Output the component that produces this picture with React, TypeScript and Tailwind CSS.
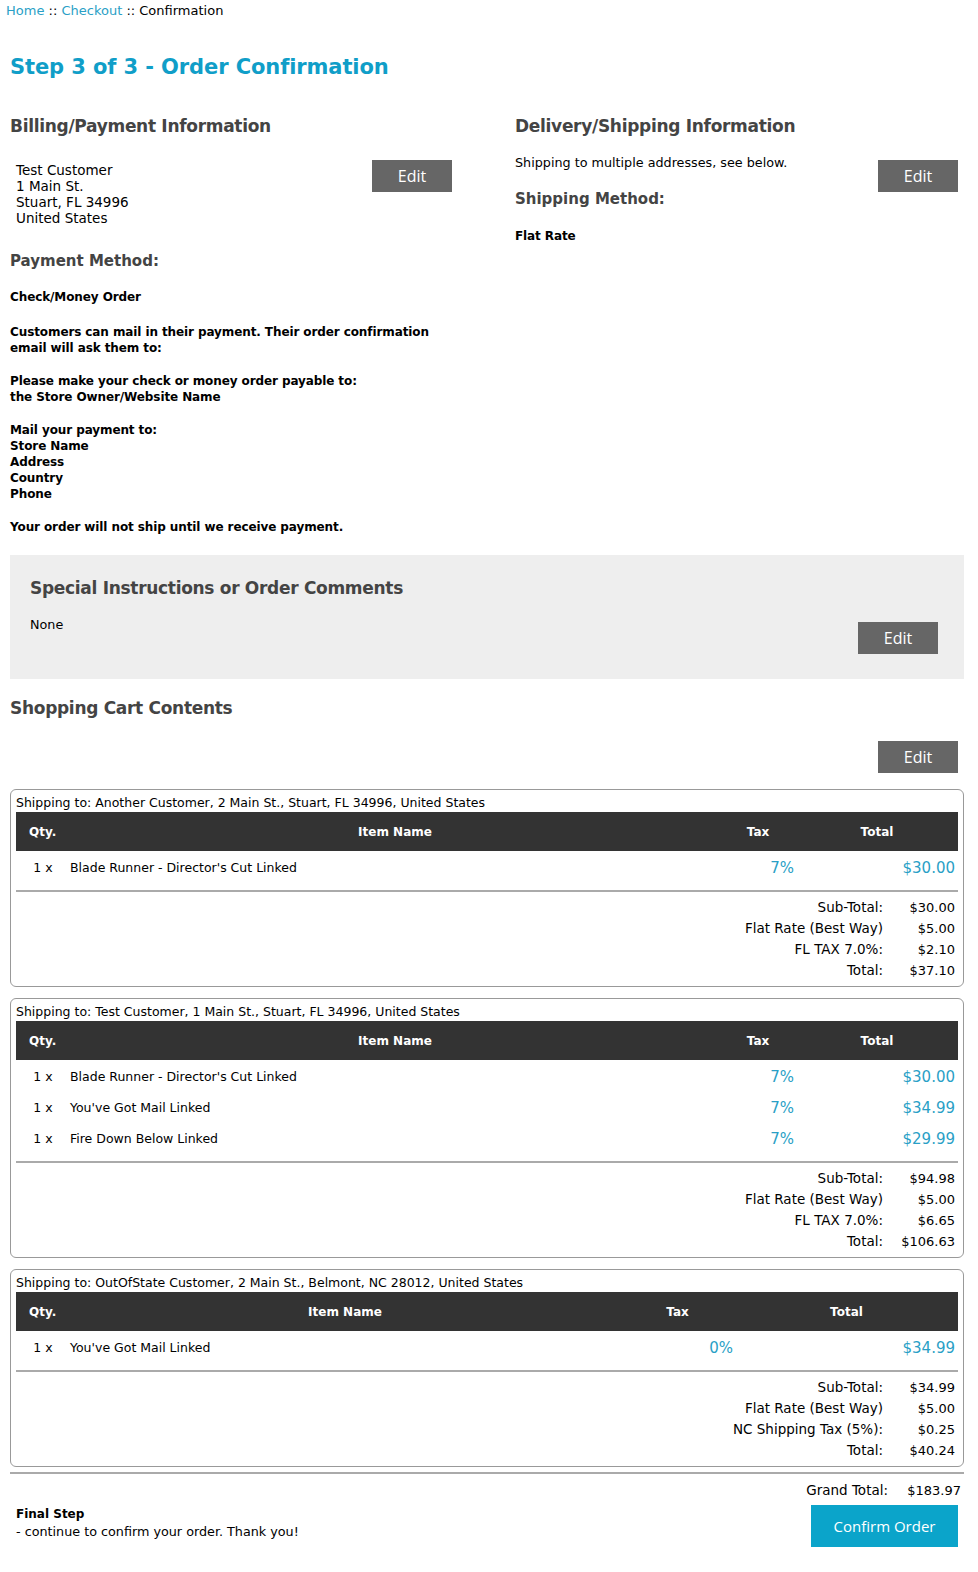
const font = "font-['Verdana','DejaVu_Sans',sans-serif]";

type Item = { qty: number; name: string; tax: string; total: string };
type Shipment = {
  address: string;
  items: Item[];
  totals: [string, string][];
  cols: [number, number, number, number];
};

const shipments: Shipment[] = [
  {
    address: "Another Customer, 2 Main St., Stuart, FL 34996, United States",
    items: [{ qty: 1, name: "Blade Runner - Director's Cut Linked", tax: "7%", total: "$30.00" }],
    totals: [
      ["Sub-Total:", "$30.00"],
      ["Flat Rate (Best Way)", "$5.00"],
      ["FL TAX 7.0%:", "$2.10"],
      ["Total:", "$37.10"],
    ],
    cols: [54, 650, 76, 162],
  },
  {
    address: "Test Customer, 1 Main St., Stuart, FL 34996, United States",
    items: [
      { qty: 1, name: "Blade Runner - Director's Cut Linked", tax: "7%", total: "$30.00" },
      { qty: 1, name: "You've Got Mail Linked", tax: "7%", total: "$34.99" },
      { qty: 1, name: "Fire Down Below Linked", tax: "7%", total: "$29.99" },
    ],
    totals: [
      ["Sub-Total:", "$94.98"],
      ["Flat Rate (Best Way)", "$5.00"],
      ["FL TAX 7.0%:", "$6.65"],
      ["Total:", "$106.63"],
    ],
    cols: [54, 650, 76, 162],
  },
  {
    address: "OutOfState Customer, 2 Main St., Belmont, NC 28012, United States",
    items: [{ qty: 1, name: "You've Got Mail Linked", tax: "0%", total: "$34.99" }],
    totals: [
      ["Sub-Total:", "$34.99"],
      ["Flat Rate (Best Way)", "$5.00"],
      ["NC Shipping Tax (5%):", "$0.25"],
      ["Total:", "$40.24"],
    ],
    cols: [54, 550, 115, 223],
  },
];

const heading = "text-[17px] leading-[22px] tracking-[-0.3px] font-bold text-[#444444]";
const boldText = "text-[12px] leading-[16px] tracking-[-0.1px] font-bold whitespace-nowrap";

function EditButton({ className = "" }: { className?: string }) {
  return (
    <button
      className={`w-[80px] h-[32px] bg-[#666666] text-white text-[16px] font-['Open_Sans','DejaVu_Sans',sans-serif] shrink-0 ${className}`}
    >
      Edit
    </button>
  );
}

function ShipmentBox({ s }: { s: Shipment }) {
  return (
    <div className="border border-[#999999] rounded-[6px] px-[5px] pt-[5px] pb-[5px]">
      <div className="text-[12.5px] leading-[16px] mb-[1px]">Shipping to: {s.address}</div>
      <table className="w-full border-collapse table-fixed">
        <colgroup>
          {s.cols.map((w, i) => (
            <col key={i} style={{ width: w }} />
          ))}
        </colgroup>
        <thead>
          <tr className="bg-[#333333] text-white text-[12px] font-bold h-[39px]">
            <th className="text-left pl-[13px]">Qty.</th>
            <th className="text-center">Item Name</th>
            <th className="text-center">Tax</th>
            <th className="text-center">Total</th>
          </tr>
        </thead>
        <tbody>
          <tr className="h-[2px]" />
          {s.items.map((it, i) => (
            <tr key={i} className="h-[31px]">
              <td className="text-center text-[12.5px]">{it.qty} x</td>
              <td className="text-[12.5px]">{it.name}</td>
              <td className="text-right text-[15px] text-[#2a9fc6] pr-[2px]">{it.tax}</td>
              <td className="text-right text-[15px] text-[#2a9fc6] pr-[3px]">{it.total}</td>
            </tr>
          ))}
        </tbody>
      </table>
      <div className="mt-[6px] border-t-2 border-[#aaaaaa]" />
      <div className="mt-[5px] flex flex-col items-end">
        {s.totals.map(([label, value], i) => (
          <div key={i} className="flex h-[21px] items-center">
            <span className="text-right text-[13.5px]">{label}</span>
            <span className="w-[75px] text-right pr-[3px] text-[13px]">{value}</span>
          </div>
        ))}
      </div>
    </div>
  );
}

export default function App() {
  return (
    <div className={`${font} bg-white text-black w-[978px] min-h-[1572px] pb-[20px]`}>
      <div className="pl-[6px] pt-[3px] text-[13px] leading-[16px]">
        <span className="text-[#2a9fc6]">Home</span> ::{" "}
        <span className="text-[#2a9fc6]">Checkout</span> :: Confirmation
      </div>

      <div className="pl-[10px] pr-[14px]">
        <h1 className="mt-[33px] text-[21px] leading-[30px] tracking-[-0.1px] font-bold text-[#109ec8]">
          Step 3 of 3 - Order Confirmation
        </h1>

        <div className="mt-[33px] grid grid-cols-[442px_443px] gap-x-[63px]">
          <div>
            <h2 className={heading}>Billing/Payment Information</h2>
            <div className="mt-[23px] flex justify-between">
              <div className="pl-[6px] pt-[2px] text-[13.5px] leading-[16px]">
                Test Customer
                <br />1 Main St.
                <br />
                Stuart, FL 34996
                <br />
                United States
              </div>
              <EditButton />
            </div>
            <h3 className="mt-[25px] text-[15px] leading-[20px] font-bold text-[#444444]">
              Payment Method:
            </h3>
            <div className={`mt-[18px] ${boldText}`}>Check/Money Order</div>
            <div className={`mt-[19px] ${boldText}`}>
              <p>
                Customers can mail in their payment. Their order confirmation
                <br />
                email will ask them to:
              </p>
              <p className="mt-[17px]">
                Please make your check or money order payable to:
                <br />
                the Store Owner/Website Name
              </p>
              <p className="mt-[17px]">
                Mail your payment to:
                <br />
                Store Name
                <br />
                Address
                <br />
                Country
                <br />
                Phone
              </p>
              <p className="mt-[17px]">Your order will not ship until we receive payment.</p>
            </div>
          </div>

          <div>
            <h2 className={heading}>Delivery/Shipping Information</h2>
            <div className="flex justify-between">
              <div>
                <div className="mt-[18px] text-[12.75px] leading-[16px]">
                  Shipping to multiple addresses, see below.
                </div>
                <h3 className="mt-[18px] text-[15px] leading-[20px] font-bold text-[#444444]">
                  Shipping Method:
                </h3>
                <div className={`mt-[19px] ${boldText}`}>Flat Rate</div>
              </div>
              <EditButton className="mt-[23px]" />
            </div>
          </div>
        </div>

        <div className="mt-[20px] bg-[#eeeeee] pl-[20px] pr-[26px] pt-[22px] pb-[25px]">
          <h2 className={heading}>Special Instructions or Order Comments</h2>
          <div className="flex justify-between">
            <div className="mt-[18px] text-[12.75px] leading-[16px]">None</div>
            <EditButton className="mt-[23px]" />
          </div>
        </div>

        <h2 className={`mt-[18px] ${heading}`}>Shopping Cart Contents</h2>
        <div className="mt-[22px] flex justify-end pr-[6px]">
          <EditButton />
        </div>

        <div className="mt-[16px] flex flex-col gap-[11px]">
          {shipments.map((s, i) => (
            <ShipmentBox key={i} s={s} />
          ))}
        </div>

        <div className="mt-[5px] border-t-2 border-[#aaaaaa]" />

        <div className="mt-[6px] flex justify-end leading-[21px]">
          <span className="text-[13.5px]">Grand Total:</span>
          <span className="w-[76px] text-right text-[13px] pr-[3px]">$183.97</span>
        </div>

        <div className="mt-[4px] flex justify-between items-start">
          <div className="pl-[6px] pt-[1px] text-[12.75px] leading-[17px]">
            <div className="font-bold text-[12px]">Final Step</div>
            <div>- continue to confirm your order. Thank you!</div>
          </div>
          <button className="mr-[6px] w-[147px] h-[42px] bg-[#0ba4ca] text-white text-[15px] font-['Open_Sans','DejaVu_Sans',sans-serif]">
            Confirm Order
          </button>
        </div>
      </div>
    </div>
  );
}
